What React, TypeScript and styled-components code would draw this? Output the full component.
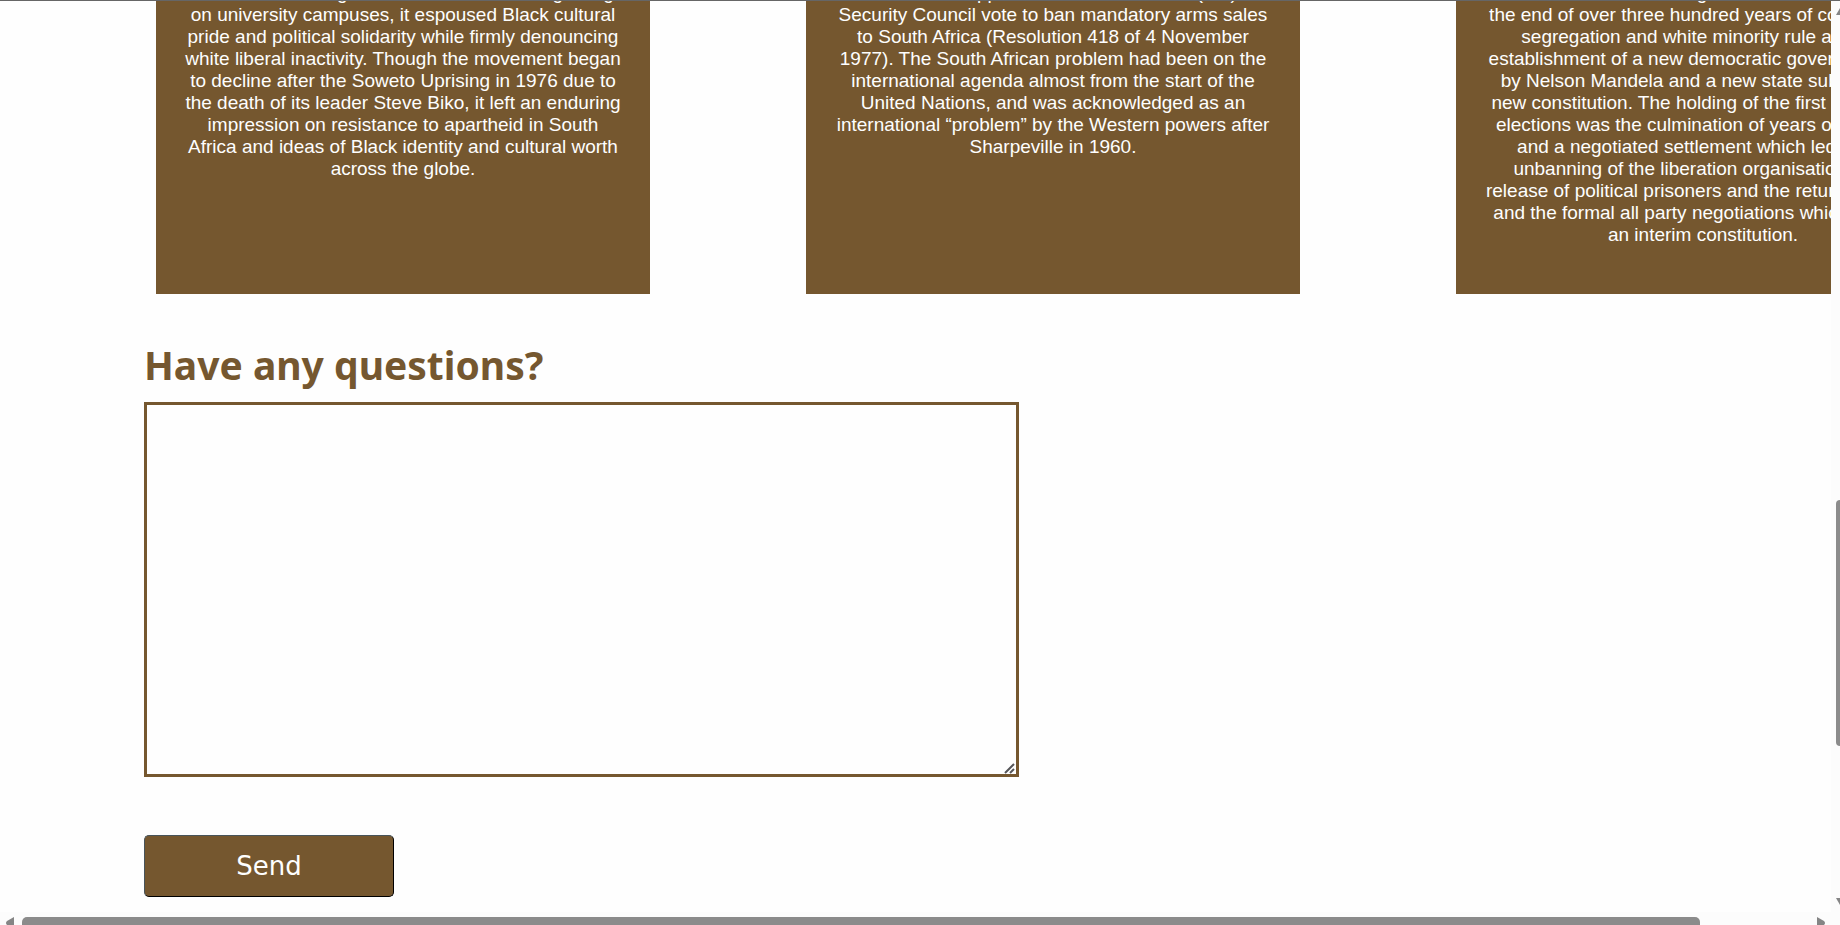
import React from 'react';
import styled, { createGlobalStyle } from 'styled-components';

const BROWN = '#75572f';

const GlobalStyle = createGlobalStyle`
  * { box-sizing: border-box; }
  body { margin: 0; background: #fefefe; }
`;

const Frame = styled.div`
  display: grid;
  grid-template-columns: minmax(0, 1fr) 9px;
  grid-template-rows: minmax(0, 1fr) 13px;
  height: 100vh;
  overflow: hidden;
  background: #fcfcfc;
  border-top: 1px solid #666666;
`;

const Page = styled.main`
  overflow: hidden;
  background: #fefefe;
`;

const Timeline = styled.section`
  display: flex;
  gap: 156px;
  height: 312px;
  margin-top: -19px;
  padding-left: 156px;
`;

const Card = styled.article`
  flex: 0 0 494px;
  background: ${BROWN};
  color: #fefefe;
`;

const CardText = styled.p`
  margin: 0;
  font: 19px/22px 'Liberation Sans', Arial, sans-serif;
  text-align: center;
  white-space: pre-line;
`;

const QuestionForm = styled.form`
  display: flex;
  flex-direction: column;
  align-items: flex-start;
  padding: 48px 144px 0;
`;

const Question = styled.label`
  color: ${BROWN};
  font: bold 39px/46px 'Noto Sans', sans-serif;
`;

const Answer = styled.textarea`
  width: 875px;
  max-width: 100%;
  height: 375px;
  margin: 14px 0 58px;
  padding: 8px;
  border: 3px solid ${BROWN};
  background: #fefefe;
  font: 20px/24px 'Liberation Sans', Arial, sans-serif;
  outline: none;

  &::-webkit-resizer {
    background: url("data:image/svg+xml,%3Csvg xmlns='http://www.w3.org/2000/svg' width='15' height='15'%3E%3Cpath d='M4 14l9-9M9 14l4-4' stroke='%23555558' stroke-width='2' fill='none'/%3E%3C/svg%3E") no-repeat right bottom;
  }
`;

const SendButton = styled.button`
  width: 250px;
  height: 62px;
  padding: 0;
  border: 1px solid;
  border-color: #48545a #000 #000 #48545a;
  border-radius: 5px;
  background: ${BROWN};
  color: #fefefe;
  font: 26px/32px 'DejaVu Sans', Verdana, sans-serif;
`;

const VerticalBar = styled.div`
  display: flex;
  flex-direction: column;
  align-items: flex-end;
  padding: 6px 0;
  overflow: hidden;
`;

const HorizontalBar = styled.div`
  display: flex;
  align-items: flex-end;
  gap: 8px;
  padding: 0 6px;
`;

const Space = styled.div<{ $share: number }>`
  flex: ${(p) => p.$share} 1 0;
`;

const VerticalThumb = styled.div`
  flex: 246 1 0;
  width: 4px;
  border-radius: 4px 0 0 4px;
  background: #8b8b8b;
`;

const HorizontalThumb = styled.div`
  flex: 1678 1 0;
  height: 8px;
  border-radius: 5px 5px 0 0;
  background: #8b8b8b;
`;

const Arrow = styled.svg`
  display: block;
  flex: none;
  fill: #858585;
`;

const cards = [
  `about racial change from the late 1960s beginning
on university campuses, it espoused Black cultural
pride and political solidarity while firmly denouncing
white liberal inactivity. Though the movement began
to decline after the Soweto Uprising in 1976 due to
the death of its leader Steve Biko, it left an enduring
impression on resistance to apartheid in South
Africa and ideas of Black identity and cultural worth
across the globe.`,
  `resolution supports the United Nations (UN)
Security Council vote to ban mandatory arms sales
to South Africa (Resolution 418 of 4 November
1977). The South African problem had been on the
international agenda almost from the start of the
United Nations, and was acknowledged as an
international “problem” by the Western powers after
Sharpeville in 1960.`,
  `The elections brought about the formal
the end of over three hundred years of colonialism,
segregation and white minority rule and the
establishment of a new democratic government led
by Nelson Mandela and a new state subject to a
new constitution. The holding of the first non-racial
elections was the culmination of years of struggle
and a negotiated settlement which led to the
unbanning of the liberation organisations, the
release of political prisoners and the return of exiles
and the formal all party negotiations which drafted
an interim constitution.`,
];

export default function App() {
  return (
    <>
      <GlobalStyle />
      <Frame>
        <Page>
          <Timeline>
            {cards.map((text) => (
              <Card key={text}>
                <CardText>{text}</CardText>
              </Card>
            ))}
          </Timeline>
          <QuestionForm onSubmit={(e) => e.preventDefault()}>
            <Question htmlFor="question">Have any questions?</Question>
            <Answer id="question" />
            <SendButton type="submit">Send</SendButton>
          </QuestionForm>
        </Page>
        <VerticalBar aria-hidden="true">
          <Arrow width="4" height="8" viewBox="0 0 4 8"><path d="M4 1 0 8h4Z" /></Arrow>
          <Space $share={485} />
          <VerticalThumb />
          <Space $share={152} />
          <Arrow width="4" height="8" viewBox="0 0 4 8"><path d="M0 0h4v7Z" /></Arrow>
        </VerticalBar>
        <HorizontalBar aria-hidden="true">
          <Arrow width="8" height="8" viewBox="0 0 8 8"><path d="M8 0v8H1Q-1 6 1 4Z" /></Arrow>
          <HorizontalThumb />
          <Space $share={101} />
          <Arrow width="8" height="8" viewBox="0 0 8 8"><path d="M0 0l7 4q2 2 0 4H0Z" /></Arrow>
        </HorizontalBar>
      </Frame>
    </>
  );
}
